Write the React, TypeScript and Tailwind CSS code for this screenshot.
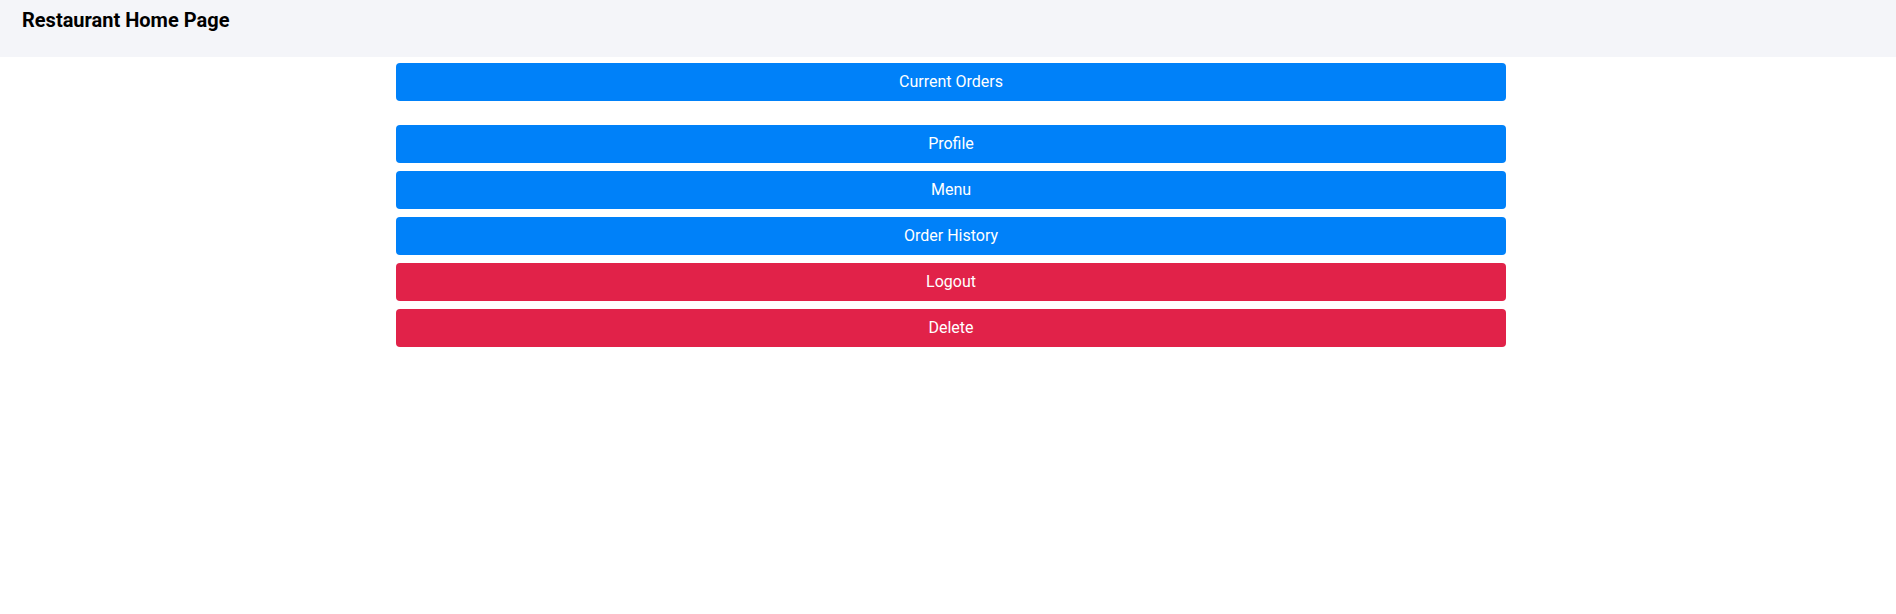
export default function App() {
  const font = { fontFamily: "Roboto, 'Liberation Sans', sans-serif" };
  const blue = "bg-[#0081f9] hover:bg-[#0069d9]";
  const red = "bg-[#e12249] hover:bg-[#c81d3f]";
  const btn = "w-full h-[38px] rounded-[4px] text-white text-base";

  return (
    <div className="min-h-screen bg-white" style={font}>
      <header className="h-[57px] bg-[#f4f5f9] px-[22px] pt-[8px]">
        <h1 className="text-[20px] font-bold leading-[24px] text-black">Restaurant Home Page</h1>
      </header>

      <div className="w-[1116px] mx-auto pl-[6px] pt-[6px]">
        <button className={`${btn} ${blue}`}>Current Orders</button>

        <div className="mt-[24px] flex flex-col gap-[8px]">
          <button className={`${btn} ${blue}`}>Profile</button>
          <button className={`${btn} ${blue}`}>Menu</button>
          <button className={`${btn} ${blue}`}>Order History</button>
          <button className={`${btn} ${red}`}>Logout</button>
          <button className={`${btn} ${red}`}>Delete</button>
        </div>
      </div>
    </div>
  );
}
